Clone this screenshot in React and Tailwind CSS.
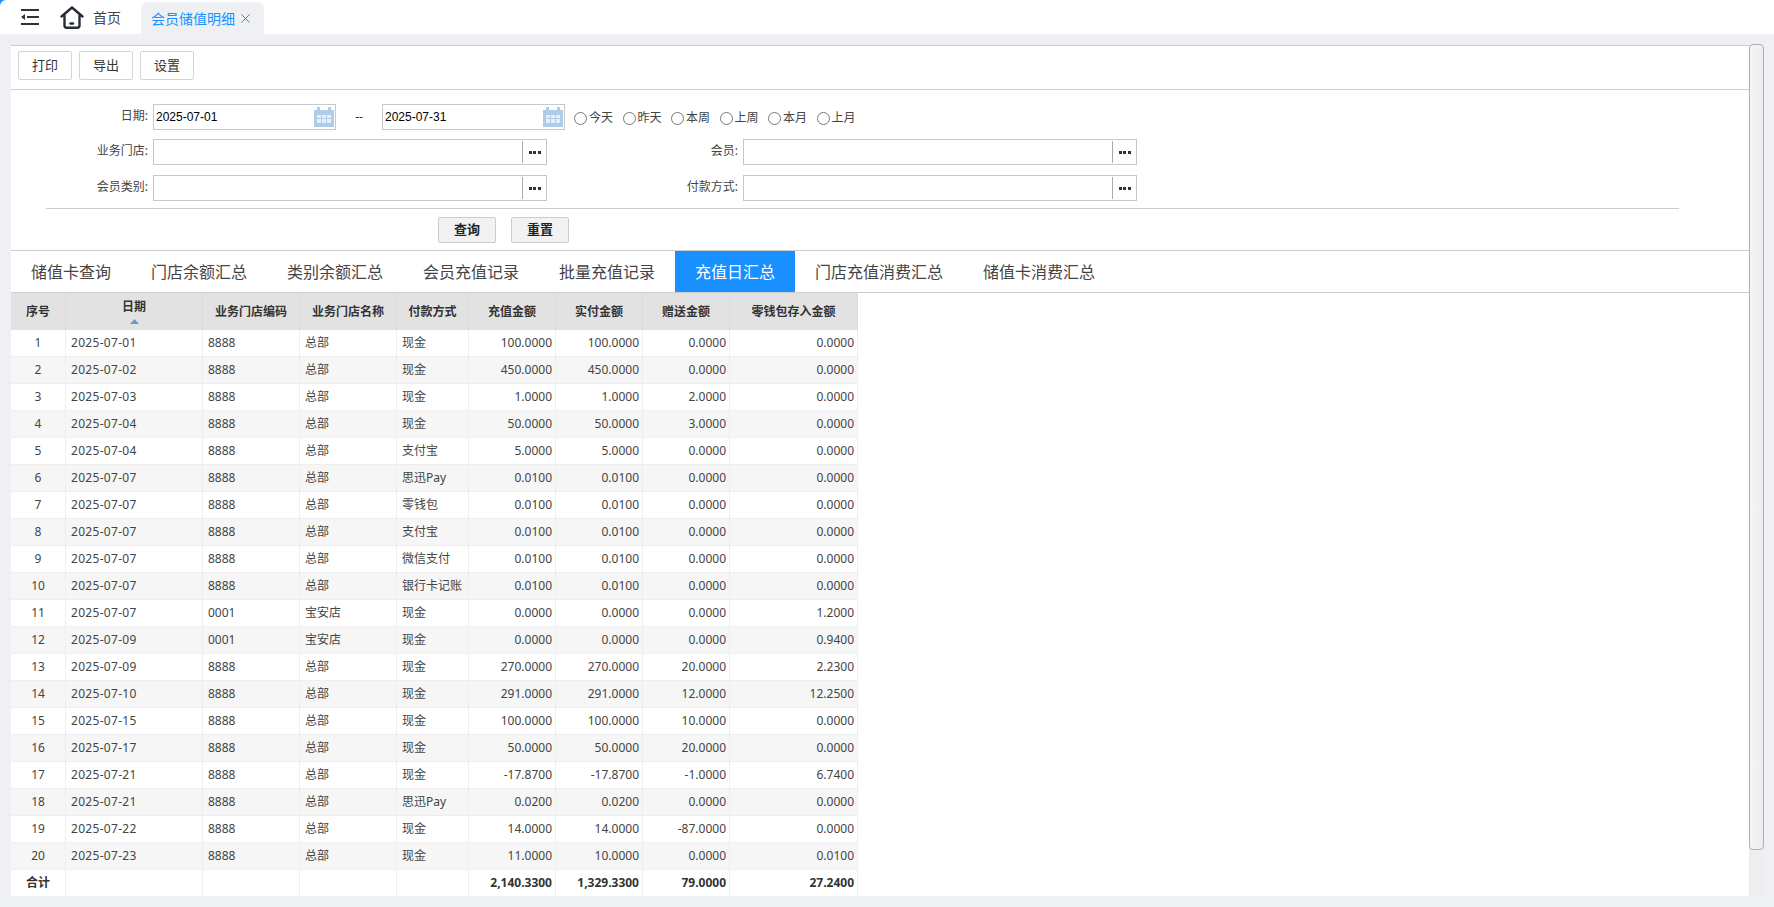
import React from "react";

const ROWS = [
  ["2025-07-01", "8888", "总部", "现金", "100.0000", "100.0000", "0.0000", "0.0000"],
  ["2025-07-02", "8888", "总部", "现金", "450.0000", "450.0000", "0.0000", "0.0000"],
  ["2025-07-03", "8888", "总部", "现金", "1.0000", "1.0000", "2.0000", "0.0000"],
  ["2025-07-04", "8888", "总部", "现金", "50.0000", "50.0000", "3.0000", "0.0000"],
  ["2025-07-04", "8888", "总部", "支付宝", "5.0000", "5.0000", "0.0000", "0.0000"],
  ["2025-07-07", "8888", "总部", "思迅Pay", "0.0100", "0.0100", "0.0000", "0.0000"],
  ["2025-07-07", "8888", "总部", "零钱包", "0.0100", "0.0100", "0.0000", "0.0000"],
  ["2025-07-07", "8888", "总部", "支付宝", "0.0100", "0.0100", "0.0000", "0.0000"],
  ["2025-07-07", "8888", "总部", "微信支付", "0.0100", "0.0100", "0.0000", "0.0000"],
  ["2025-07-07", "8888", "总部", "银行卡记账", "0.0100", "0.0100", "0.0000", "0.0000"],
  ["2025-07-07", "0001", "宝安店", "现金", "0.0000", "0.0000", "0.0000", "1.2000"],
  ["2025-07-09", "0001", "宝安店", "现金", "0.0000", "0.0000", "0.0000", "0.9400"],
  ["2025-07-09", "8888", "总部", "现金", "270.0000", "270.0000", "20.0000", "2.2300"],
  ["2025-07-10", "8888", "总部", "现金", "291.0000", "291.0000", "12.0000", "12.2500"],
  ["2025-07-15", "8888", "总部", "现金", "100.0000", "100.0000", "10.0000", "0.0000"],
  ["2025-07-17", "8888", "总部", "现金", "50.0000", "50.0000", "20.0000", "0.0000"],
  ["2025-07-21", "8888", "总部", "现金", "-17.8700", "-17.8700", "-1.0000", "6.7400"],
  ["2025-07-21", "8888", "总部", "思迅Pay", "0.0200", "0.0200", "0.0000", "0.0000"],
  ["2025-07-22", "8888", "总部", "现金", "14.0000", "14.0000", "-87.0000", "0.0000"],
  ["2025-07-23", "8888", "总部", "现金", "11.0000", "10.0000", "0.0000", "0.0100"],
];

const TABS = ["储值卡查询", "门店余额汇总", "类别余额汇总", "会员充值记录", "批量充值记录", "充值日汇总", "门店充值消费汇总", "储值卡消费汇总"];
const RANGES = ["今天", "昨天", "本周", "上周", "本月", "上月"];
const WIDTHS = ["w-[55px]", "w-[137px]", "w-[97px]", "w-[97px]", "w-[72px]", "w-[87px]", "w-[87px]", "w-[87px]", "w-[128px]"];
const HEADERS = ["序号", "日期", "业务门店编码", "业务门店名称", "付款方式", "充值金额", "实付金额", "赠送金额", "零钱包存入金额"];

function CalendarIcon() {
  return (
    <svg width="20" height="20" viewBox="0 0 20 20" className="shrink-0">
      <path fill="#aecde8" d="M0 3h3V0h3v3h8V0h3v3h3v17H0z" />
      <path fill="#e6f0f9" d="M3 8h4v3H3zM8 8h4v3H8zM13 8h4v3h-4zM3 12h4v4H3zM8 12h4v4H8zM13 12h4v4h-4z" />
    </svg>
  );
}

function DateInput({ value }) {
  return (
    <div className="w-[183px] h-[26px] border border-[#c8c8c8] flex items-center justify-between pl-[2px] pr-[1px] font-['Liberation_Sans',sans-serif] text-[12px] text-black">
      <span>{value}</span>
      <CalendarIcon />
    </div>
  );
}

function PickerInput() {
  return (
    <div className="w-[394px] h-[26px] border border-[#c8c8c8] flex justify-end items-center">
      <div className="w-[24px] h-[22px] border-l border-[#aaaaaa] flex items-center justify-center gap-[1.5px]">
        <span className="w-[3px] h-[3px] bg-[#333333]" />
        <span className="w-[3px] h-[3px] bg-[#333333]" />
        <span className="w-[3px] h-[3px] bg-[#333333]" />
      </div>
    </div>
  );
}

function FieldLabel({ children, className }) {
  return <div className={`text-right text-[12px] text-[#444444] pb-[3px] pr-[5px] ${className}`}>{children}</div>;
}

export default function App() {
  return (
    <div className="h-[907px] w-full overflow-hidden bg-[#1890ff] font-['Noto_Sans','Noto_Sans_CJK_SC',sans-serif]">
      <div className="h-[34px] bg-white rounded-tl-[6px] flex items-end">
        <div className="h-[34px] flex items-center pl-[21px]">
          <svg width="18" height="16" viewBox="0 0 18 16">
            <path fill="#333333" d="M0 0h18v2H0zM6 7h12v2H6zM0 14h18v2H0zM4 5v6L0 8z" />
          </svg>
          <svg width="24" height="23" viewBox="0 0 24 23" fill="none" stroke="#272c36" strokeWidth="2.4" strokeLinecap="round" strokeLinejoin="round" className="ml-[21px]">
            <path d="M1.5 10.5 12 1.5l10.5 9M4.5 9v10.5a2.2 2.2 0 0 0 2.2 2.2h10.6a2.2 2.2 0 0 0 2.2-2.2V9" />
            <path d="M10.5 17.5h2.5" />
          </svg>
          <span className="ml-[9px] text-[14px] text-[#444444]">首页</span>
        </div>
        <div className="ml-[20px] w-[123px] h-[32px] bg-[#eef0f4] rounded-t-[7px] flex items-center pl-[10px] text-[14px] text-[#1890ff]">
          <span>会员储值明细</span>
          <svg width="9" height="9" viewBox="0 0 9 9" stroke="#1890ff" strokeWidth="1" className="ml-[6px]">
            <path d="M.5.5l8 8M8.5.5l-8 8" />
          </svg>
        </div>
      </div>

      <div className="h-[873px] bg-[#eef0f4] flex pl-[11px] pr-[10px] pt-[11px] pb-[11px] text-[#333333]">
        <div className="flex-1 min-w-0 bg-white border-t border-[#cccccc] overflow-hidden">
          <div className="flex gap-[7px] pl-[7px] pt-[5px] pb-[9px] border-b border-[#cccccc]">
            {["打印", "导出", "设置"].map((b) => (
              <button key={b} className="w-[54px] h-[29px] border border-[#d4d4d4] rounded-[2px] bg-white text-[13px] text-[#333333]">
                {b}
              </button>
            ))}
          </div>

          <div className="pt-[14px] border-b border-[#cccccc]">
            <div className="flex items-center h-[26px]">
              <FieldLabel className="w-[142px]">日期:</FieldLabel>
              <DateInput value="2025-07-01" />
              <div className="w-[46px] text-center text-[12px]">--</div>
              <DateInput value="2025-07-31" />
              <div className="flex ml-[9px] gap-[9.5px] mt-[2px]">
                {RANGES.map((r) => (
                  <label key={r} className="flex items-center gap-[2px] text-[12px] text-[#444444]">
                    <input type="radio" name="range" className="m-0 w-[13px] h-[13px]" />
                    <span>{r}</span>
                  </label>
                ))}
              </div>
            </div>
            <div className="flex items-center h-[26px] mt-[9px]">
              <FieldLabel className="w-[142px]">业务门店:</FieldLabel>
              <PickerInput />
              <FieldLabel className="w-[196px]">会员:</FieldLabel>
              <PickerInput />
            </div>
            <div className="flex items-center h-[26px] mt-[10px]">
              <FieldLabel className="w-[142px]">会员类别:</FieldLabel>
              <PickerInput />
              <FieldLabel className="w-[196px]">付款方式:</FieldLabel>
              <PickerInput />
            </div>
            <div className="h-px w-[1633px] ml-[35px] mt-[7px] bg-[#cccccc]" />
            <div className="flex gap-[15px] pl-[427px] mt-[8px] mb-[7px]">
              <button className="w-[58px] h-[26px] border border-[#cccccc] rounded-[2px] bg-[#f2f2f2] text-[13px] font-bold text-[#222222]">查询</button>
              <button className="w-[58px] h-[26px] border border-[#cccccc] rounded-[2px] bg-[#f2f2f2] text-[13px] font-bold text-[#222222]">重置</button>
            </div>
          </div>

          <div className="flex h-[42px] border-b border-[#cccccc]">
            {TABS.map((t) => (
              <div key={t} className={t === "充值日汇总" ? "h-[41px] px-[20px] flex items-center text-[16px] bg-[#1890ff] text-white" : "h-[41px] px-[20px] flex items-center text-[16px] text-[#444444]"}>
                {t}
              </div>
            ))}
          </div>

          <table className="table-fixed w-[847px] border-separate border-spacing-0 text-[12px] text-[#444444]">
            <colgroup>
              {WIDTHS.map((w, i) => (
                <col key={i} className={w} />
              ))}
            </colgroup>
            <thead>
              <tr className="h-[37px] bg-[#e2e2e2]">
                {HEADERS.map((h, i) => (
                  <th key={h} className="border-r border-[#dadada] font-bold text-[#333333] text-center p-0 align-middle">
                    {i === 1 ? (
                      <div className="flex flex-col items-center">
                        <span className="leading-[16px]">{h}</span>
                        <svg width="9" height="5" viewBox="0 0 9 5" className="mt-[4px]">
                          <path fill="#6f96cf" d="M4.5 0 9 5H0z" />
                        </svg>
                      </div>
                    ) : (
                      h
                    )}
                  </th>
                ))}
              </tr>
            </thead>
            <tbody>
              {ROWS.map((row, i) => (
                <tr key={i} className={i % 2 === 1 ? "h-[27px] bg-[#f6f6f6]" : "h-[27px] bg-white"}>
                  <td className="border-r border-b border-[#eeeeee] text-center p-0">{i + 1}</td>
                  {row.map((cell, j) => (
                    <td
                      key={j}
                      className={
                        j > 3
                          ? "border-r border-b border-[#eeeeee] text-right pl-0 pr-[3px] py-0"
                          : j === 0
                            ? "border-r border-b border-[#eeeeee] pl-[5px] pr-0 py-0 tracking-[0.3px] whitespace-nowrap"
                            : "border-r border-b border-[#eeeeee] pl-[5px] pr-0 py-0 whitespace-nowrap overflow-hidden"
                      }
                    >
                      {cell}
                    </td>
                  ))}
                </tr>
              ))}
              <tr className="h-[26px] bg-white font-bold text-[#333333]">
                <td className="border-r border-[#eeeeee] text-center p-0">合计</td>
                <td className="border-r border-[#eeeeee] p-0" />
                <td className="border-r border-[#eeeeee] p-0" />
                <td className="border-r border-[#eeeeee] p-0" />
                <td className="border-r border-[#eeeeee] p-0" />
                <td className="border-r border-[#eeeeee] text-right pr-[3px] pl-0 py-0">2,140.3300</td>
                <td className="border-r border-[#eeeeee] text-right pr-[3px] pl-0 py-0">1,329.3300</td>
                <td className="border-r border-[#eeeeee] text-right pr-[3px] pl-0 py-0">79.0000</td>
                <td className="border-r border-[#eeeeee] text-right pr-[3px] pl-0 py-0">27.2400</td>
              </tr>
            </tbody>
          </table>
        </div>

        <div className="w-[15px] shrink-0 bg-[#eeeeee]">
          <div className="h-[806px] -mt-px rounded-[4px] border border-[#b0b0b0] bg-gradient-to-r from-[#f6f6f6] to-[#ececec]" />
        </div>
      </div>
    </div>
  );
}
